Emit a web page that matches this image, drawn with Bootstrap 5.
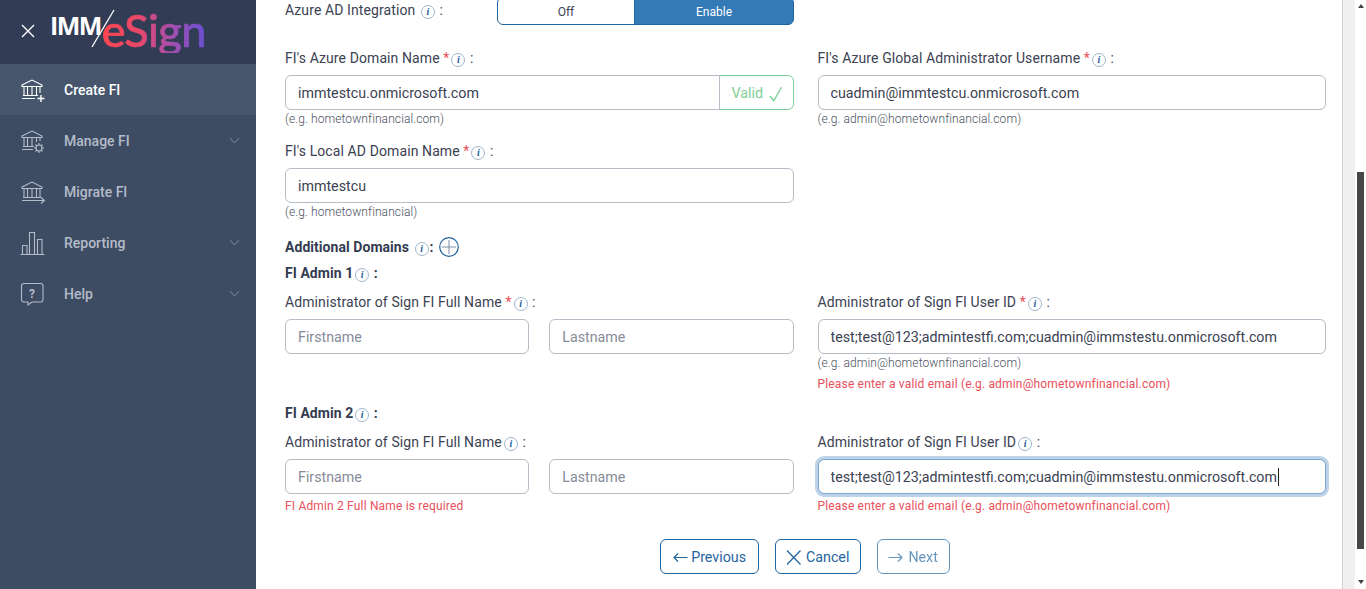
<!DOCTYPE html>
<html lang="en">
<head>
  <meta charset="UTF-8" />
  <meta name="viewport" content="width=device-width, initial-scale=1">
  <title>IMM eSign - Create FI</title>
  <link href="https://cdn.jsdelivr.net/npm/bootstrap@5.3.0/dist/css/bootstrap.min.css" rel="stylesheet" />
  <style>
    html, body { height: 100%; overflow: hidden; }
    body { font-family: Roboto, "Liberation Sans", sans-serif; font-size: 14px; color: #3b4252; background: #fff; }
    .app-shell { height: 589px; }

    .side-panel { width: 256px; background: #3d4b63; flex-shrink: 0; }
    .side-head { height: 64px; background: #323d55; }
    .close-x { margin-left: 21px; margin-top: 24px; width: 14px; height: 14px; flex-shrink: 0; }
    .logo-imm { color: #fff; font-family: "Open Sans", sans-serif; font-weight: 700; font-size: 25px; line-height: 26px; margin-left: 15px; margin-top: 12px; letter-spacing: -1.6px; }
    .logo-slash { margin-left: -10px; margin-top: 9px; width: 24px; height: 39px; flex-shrink: 0; }
    .logo-sign { font-family: Lato, sans-serif; font-weight: 500; font-size: 45px; line-height: 45px; margin-left: -13px; margin-top: 8px; letter-spacing: -.6px; -webkit-text-stroke: .7px transparent;
      background: linear-gradient(90deg, #ff4650 0%, #e9486a 35%, #a24fb0 68%, #6a4fd2 100%); -webkit-background-clip: text; background-clip: text; color: transparent; }
    .side-item { height: 51px; color: #b4bcc9; font-weight: 500; padding-left: 20px; padding-right: 16px; }
    .side-item span { padding-top: 2px; }
    .side-item.is-on { background: #47566c; color: #fff; }
    .side-ico { width: 26px; height: 26px; margin-right: 18px; flex-shrink: 0; }
    .side-chev { width: 11px; height: 7px; margin-left: auto; }

    .form-pane { width: 1086px; flex-shrink: 0; padding: 0 16px 0 29px; overflow: hidden; }
    .form-inner { margin-top: -3px; }
    .gray-strip { width: 13px; background: #f0f0f0; border-left: 1px solid #d2d2d2; flex-shrink: 0; }
    .fake-scroll { width: 11px; background: #fff; flex-shrink: 0; padding-left: 2px; }
    .arrow-up { width: 0; height: 0; border: 3px solid transparent; border-top: 0; border-bottom: 4px solid #444; margin: 4px 0 0 1px; }
    .arrow-down { width: 0; height: 0; border: 3px solid transparent; border-bottom: 0; border-top: 4px solid #444; margin: 31px 0 0 1px; }
    .scroll-thumb { width: 7px; height: 377px; background: #474747; margin-top: 164px; }

    .fld-label { display: block; height: 20px; line-height: 20px; margin-bottom: 7px; color: #3b4252; white-space: nowrap; letter-spacing: .1px; }
    .req { color: #e8505b; }
    .info-dot { display: inline-flex; align-items: center; justify-content: center; width: 14px; height: 14px; border: 1px solid #9fb6ce; border-radius: 50%; color: #23609c;
      font-family: "Liberation Serif", serif; font-style: italic; font-weight: 700; font-size: 10px; line-height: 1; vertical-align: 0; margin: 0 1px 0 2px; letter-spacing: 0; }
    .form-control.fld-input { height: 35px; padding: 1px 12px 0; font-size: 14.25px; color: #3b4252; border: 1px solid #b7bbc6; border-radius: 6px; box-shadow: none; }
    .fld-input::placeholder { color: #868c98; }
    .form-control.fld-input.is-focused { border-color: #7fa8d0; box-shadow: 0 0 0 3px #bdd4e8; }
    .caret-bar { position: absolute; top: 9px; left: 460px; width: 1px; height: 18px; background: #222; }
    .valid-tag { height: 35px; background: #fff; color: #7fd09a; border: 1px solid #7fd09a; border-radius: 0 6px 6px 0; font-size: 14.25px; padding: 2px 10px 0 12px; width: 75px; }
    .valid-tag svg { width: 14px; height: 16px; margin-left: 6px; }
    .hint-line { display: block; height: 16px; line-height: 18px; font-size: 12px; font-weight: 300; color: #4a5060; letter-spacing: .1px; }
    .err-line { display: block; height: 16px; line-height: 16px; font-size: 12px; color: #e8505b; letter-spacing: .17px; }
    .sect-title { height: 20px; line-height: 20px; font-weight: 700; color: #333c50; letter-spacing: .05px; }
    .two-names { gap: 20px; }
    .two-names > * { flex: 1 1 0; min-width: 0; }

    .toggle-row { height: 28px; margin-bottom: 23px; }
    .toggle-label { width: 212px; height: 20px; line-height: 20px; margin-top: 3px; letter-spacing: .1px; }
    .toggle-wrap { width: 297px; height: 28px; }
    .toggle-wrap .btn { font-size: 12px; padding: 1px 0 0; line-height: 27px; height: 28px; border-color: #1f659f; }
    .toggle-wrap .btn-off { background: #fff; color: #3b4252; border-radius: 6px 0 0 6px; flex: 0 0 138px; }
    .toggle-wrap .btn-on { background: #337ab7; color: #fff; border-radius: 0 6px 6px 0; }

    .gap-a { margin-bottom: 15px; }
    .gap-b { margin-bottom: 18px; }
    .gap-c { margin-bottom: 6px; }
    .gap-d { margin-bottom: 9px; }
    .gap-e { margin-bottom: 11px; }
    .err-gap { margin-top: 6px; }
    .err-tight { margin-top: 4px; }
    .add-ring { width: 20px; height: 20px; vertical-align: -5px; margin-left: 2px; }

    .act-row { gap: 16px; margin-top: 25px; margin-left: -1px; }
    .act-btn { height: 35px; padding: 2px 11px 0 10px; font-size: 14.25px; color: #1f659f; border: 1px solid #1f659f; border-radius: 6px; background: #fff; }
    .act-btn svg { width: 15px; height: 15px; margin-right: 5px; }
    .act-btn.btn-prev { padding-left: 12px; padding-right: 12px; }
    .act-btn.btn-prev svg { margin-right: 3px; }
    .act-btn.is-off { opacity: .68; pointer-events: none; }
  </style>
</head>
<body>
  <div class="app-shell d-flex">

    <aside class="side-panel">
      <div class="side-head d-flex align-items-start">
        <svg class="close-x" viewBox="0 0 14 14" fill="none" stroke="#fff" stroke-width="1.4"><path d="M1 1l12 12M13 1L1 13"/></svg>
        <span class="logo-imm">IMM</span>
        <svg class="logo-slash" viewBox="0 0 24 39" fill="none" stroke="#fff" stroke-width="1.3"><path d="M23 1L1 38"/></svg>
        <span class="logo-sign">eSign</span>
      </div>

      <div class="side-item is-on d-flex align-items-center">
        <svg class="side-ico" viewBox="0 0 26 26" fill="none" stroke="#fff" stroke-width="1.1">
          <path d="M2 8L12 3l10 5v1.5H2zM4 10v8M7.5 10v8M12 10v8M16.5 10v8M20 10v6M3 18.5h15M2 21.5h13"/>
          <path d="M21 18v7M17.5 21.5h7" stroke-width="1.4"/>
        </svg>
        <span>Create FI</span>
      </div>
      <div class="side-item d-flex align-items-center">
        <svg class="side-ico" viewBox="0 0 26 26" fill="none" stroke="#b4bcc9" stroke-width="1.1">
          <path d="M2 8L12 3l10 5v1.5H2zM4 10v8M7.5 10v8M12 10v8M16.5 10v4M20 10v3M3 18.5h11M2 21.5h11"/>
          <circle cx="19" cy="20" r="3"/>
          <path d="M19 15v2M19 23v2M14 20h2M22 20h2M15.500 16.500l1.400 1.400M21.100 22.100l1.400 1.400M22.500 16.500l-1.400 1.400M16.900 22.100l-1.400 1.400"/>
        </svg>
        <span>Manage FI</span>
        <svg class="side-chev" viewBox="0 0 12 7" fill="none" stroke="#8e98a8"><path d="M1 1l5 5 5-5"/></svg>
      </div>
      <div class="side-item d-flex align-items-center">
        <svg class="side-ico" viewBox="0 0 26 26" fill="none" stroke="#b4bcc9" stroke-width="1.1">
          <path d="M2 8L12 3l10 5v1.5H2zM4 10v8M7.5 10v8M12 10v8M16.5 10v8M20 10v8M3 18.5h18M2 21.5h22M21 18.5l3.5 3-3.5 3"/>
        </svg>
        <span>Migrate FI</span>
      </div>
      <div class="side-item d-flex align-items-center">
        <svg class="side-ico" viewBox="0 0 26 26" fill="none" stroke="#b4bcc9" stroke-width="1.1">
          <path d="M.5 24.500h24M2.500 24.500V15.500H7v9M9.500 24.500V2.500H14.500v22M17.500 24.500V9.500H22v15"/>
        </svg>
        <span>Reporting</span>
        <svg class="side-chev" viewBox="0 0 12 7" fill="none" stroke="#8e98a8"><path d="M1 1l5 5 5-5"/></svg>
      </div>
      <div class="side-item d-flex align-items-center">
        <svg class="side-ico" viewBox="0 0 26 26" fill="none" stroke="#b4bcc9" stroke-width="1.1">
          <path d="M4 2.500h16.500a2.500 2.500 0 0 1 2.500 2.500v13.500a2.500 2.500 0 0 1-2.500 2.500H12l-4 3v-3H4a2.500 2.500 0 0 1-2.500-2.500V5A2.500 2.500 0 0 1 4 2.500z"/>
          <text x="12" y="16.500" text-anchor="middle" font-family="Roboto, sans-serif" font-size="12" font-weight="700" fill="#b4bcc9" stroke="none">?</text>
        </svg>
        <span>Help</span>
        <svg class="side-chev" viewBox="0 0 12 7" fill="none" stroke="#8e98a8"><path d="M1 1l5 5 5-5"/></svg>
      </div>
    </aside>

    <main class="form-pane">
      <div class="form-inner">

        <div class="toggle-row d-flex">
          <div class="toggle-label">Azure AD Integration <span class="info-dot">i</span> :</div>
          <div class="toggle-wrap btn-group">
            <button type="button" class="btn btn-off">Off</button>
            <button type="button" class="btn btn-on">Enable</button>
          </div>
        </div>

        <div class="row gap-a">
          <div class="col-6">
            <label class="fld-label">FI's Azure Domain Name <span class="req">*</span><span class="info-dot">i</span> :</label>
            <div class="input-group">
              <input class="form-control fld-input" value="immtestcu.onmicrosoft.com">
              <span class="input-group-text valid-tag">Valid
                <svg viewBox="0 0 14 16" fill="none" stroke="#7fd09a" stroke-width="1.500"><path d="M1 10l4 5L13 1"/></svg>
              </span>
            </div>
            <span class="hint-line">(e.g. hometownfinancial.com)</span>
          </div>
          <div class="col-6">
            <label class="fld-label">FI's Azure Global Administrator Username <span class="req">*</span><span class="info-dot">i</span> :</label>
            <input class="form-control fld-input" value="cuadmin@immtestcu.onmicrosoft.com">
            <span class="hint-line">(e.g. admin@hometownfinancial.com)</span>
          </div>
        </div>

        <div class="row gap-b">
          <div class="col-6">
            <label class="fld-label">FI's Local AD Domain Name <span class="req">*</span><span class="info-dot">i</span> :</label>
            <input class="form-control fld-input" value="immtestcu">
            <span class="hint-line">(e.g. hometownfinancial)</span>
          </div>
        </div>

        <div class="sect-title gap-c">Additional Domains <span class="info-dot">i</span>:
          <svg class="add-ring" viewBox="0 0 20 20" fill="none"><circle cx="10" cy="10" r="9.300" stroke="#1f659f" stroke-width="1.200"/><path d="M10 3v14M3 10h14" stroke="#7a8ea6"/></svg>
        </div>
        <div class="sect-title gap-d">FI Admin 1<span class="info-dot">i</span> :</div>

        <div class="row gap-e">
          <div class="col-6">
            <label class="fld-label">Administrator of Sign FI Full Name <span class="req">*</span><span class="info-dot">i</span> :</label>
            <div class="two-names d-flex">
              <input class="form-control fld-input" placeholder="Firstname">
              <input class="form-control fld-input" placeholder="Lastname">
            </div>
          </div>
          <div class="col-6">
            <label class="fld-label">Administrator of Sign FI User ID <span class="req">*</span><span class="info-dot">i</span> :</label>
            <input class="form-control fld-input" value="test;test@123;admintestfi.com;cuadmin@immstestu.onmicrosoft.com">
            <span class="hint-line">(e.g. admin@hometownfinancial.com)</span>
            <span class="err-line err-gap">Please enter a valid email (e.g. admin@hometownfinancial.com)</span>
          </div>
        </div>

        <div class="sect-title gap-d">FI Admin 2<span class="info-dot">i</span> :</div>

        <div class="row">
          <div class="col-6">
            <label class="fld-label">Administrator of Sign FI Full Name<span class="info-dot">i</span> :</label>
            <div class="two-names d-flex">
              <input class="form-control fld-input" placeholder="Firstname">
              <input class="form-control fld-input" placeholder="Lastname">
            </div>
            <span class="err-line err-tight">FI Admin 2 Full Name is required</span>
          </div>
          <div class="col-6">
            <label class="fld-label">Administrator of Sign FI User ID<span class="info-dot">i</span> :</label>
            <div class="position-relative">
              <input class="form-control fld-input is-focused" value="test;test@123;admintestfi.com;cuadmin@immstestu.onmicrosoft.com">
              <span class="caret-bar"></span>
            </div>
            <span class="err-line err-tight">Please enter a valid email (e.g. admin@hometownfinancial.com)</span>
          </div>
        </div>

        <div class="act-row d-flex justify-content-center">
          <button type="button" class="act-btn btn-prev btn d-inline-flex align-items-center">
            <svg viewBox="0 0 15 15" fill="none" stroke="#1f659f" stroke-width="1.200"><path d="M14.500 7.500H1M5 3.500l-4 4 4 4"/></svg>Previous
          </button>
          <button type="button" class="act-btn btn d-inline-flex align-items-center">
            <svg viewBox="0 0 15 15" fill="none" stroke="#1f659f" stroke-width="1.200"><path d="M1 .5l13.500 14M14.500 .5L1 14.500"/></svg>Cancel
          </button>
          <button type="button" class="act-btn is-off btn d-inline-flex align-items-center">
            <svg viewBox="0 0 15 15" fill="none" stroke="#1f659f" stroke-width="1.200"><path d="M.5 7.500H14M10 3.500l4 4-4 4"/></svg>Next
          </button>
        </div>

      </div>
    </main>

    <div class="gray-strip"></div>
    <div class="fake-scroll">
      <div class="arrow-up"></div>
      <div class="scroll-thumb"></div>
      <div class="arrow-down"></div>
    </div>
  </div>

  <script src="https://cdn.jsdelivr.net/npm/bootstrap@5.3.0/dist/js/bootstrap.bundle.min.js"></script>
</body>
</html>
